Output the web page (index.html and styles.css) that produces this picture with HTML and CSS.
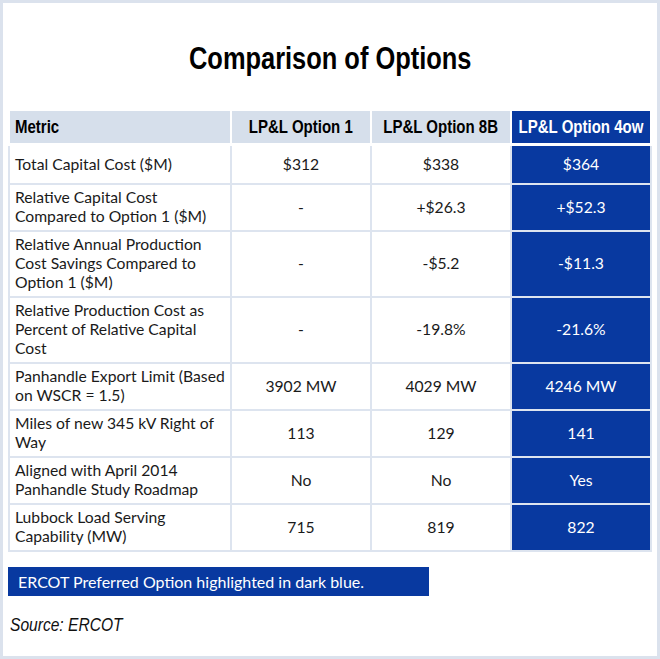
FILE: index.html
```html
<!DOCTYPE html>
<html>
<head>
<meta charset="utf-8">
<link rel="stylesheet" href="styles.css">
</head>
<body>
<div class="frame">
  <h1 class="title"><span class="narrow">Comparison of Options</span></h1>
  <table class="cmp">
    <colgroup>
      <col class="c-metric"><col class="c-opt"><col class="c-opt"><col class="c-opt">
    </colgroup>
    <thead>
      <tr>
        <th class="metric"><div class="hcell"><span class="narrow">Metric</span></div></th>
        <th><div class="hcell"><span class="narrow">LP&amp;L Option 1</span></div></th>
        <th><div class="hcell"><span class="narrow">LP&amp;L Option 8B</span></div></th>
        <th class="hl"><div class="hcell"><span class="narrow">LP&amp;L Option 4ow</span></div></th>
      </tr>
    </thead>
    <tbody>
      <tr class="single">
        <td class="metric">Total Capital Cost ($M)</td>
        <td>$312</td><td>$338</td><td class="hl">$364</td>
      </tr>
      <tr>
        <td class="metric">Relative Capital Cost Compared to Option 1 ($M)</td>
        <td>-</td><td>+$26.3</td><td class="hl">+$52.3</td>
      </tr>
      <tr>
        <td class="metric">Relative Annual Production Cost Savings Compared to Option 1 ($M)</td>
        <td>-</td><td>-$5.2</td><td class="hl">-$11.3</td>
      </tr>
      <tr>
        <td class="metric">Relative Production Cost as Percent of Relative Capital Cost</td>
        <td>-</td><td>-19.8%</td><td class="hl">-21.6%</td>
      </tr>
      <tr>
        <td class="metric">Panhandle Export Limit (Based on WSCR = 1.5)</td>
        <td>3902 MW</td><td>4029 MW</td><td class="hl">4246 MW</td>
      </tr>
      <tr>
        <td class="metric">Miles of new 345 kV Right of Way</td>
        <td>113</td><td>129</td><td class="hl">141</td>
      </tr>
      <tr>
        <td class="metric">Aligned with April 2014 Panhandle Study Roadmap</td>
        <td>No</td><td>No</td><td class="hl">Yes</td>
      </tr>
      <tr>
        <td class="metric">Lubbock Load Serving Capability (MW)</td>
        <td>715</td><td>819</td><td class="hl">822</td>
      </tr>
    </tbody>
  </table>
  <div class="note">ERCOT Preferred Option highlighted in dark blue.</div>
  <div class="source"><span class="narrow">Source: ERCOT</span></div>
</div>
</body>
</html>
```
FILE: styles.css
```css
html, body {
  margin: 0;
  padding: 0;
  background: #ffffff;
}

.frame {
  box-sizing: border-box;
  width: 660px;
  height: 659px;
  border: 3px solid #dbe2ed;
  padding: 0 5px;
  background: #ffffff;
}

/* Arial Narrow look-alike: Liberation Sans condensed horizontally */
.narrow {
  display: inline-block;
  transform: scaleX(0.82);
  white-space: nowrap;
}

.title {
  margin: 0;
  padding-top: 39px;
  height: 68px;
  box-sizing: border-box;
  text-align: center;
  font-family: "Liberation Sans", Arial, sans-serif;
  font-weight: bold;
  font-size: 31px;
  line-height: 34px;
  color: #000000;
}

.title .narrow {
  transform-origin: center;
}

.cmp {
  margin-top: 38px;
  width: 644px;
  border-collapse: collapse;
  table-layout: fixed;
  font-family: Lato, "Liberation Sans", sans-serif;
  font-size: 15.7px;
  line-height: 19px;
  color: #1a1a1a;
}

.c-metric { width: 222px; }
.c-opt { width: 140px; }

.cmp th,
.cmp td {
  border: 2px solid #dde4ef;
  padding: 3px 6px 4px;
  text-align: center;
  vertical-align: middle;
}

.cmp td.metric {
  padding-left: 5px;
  padding-right: 1px;
}

.cmp th {
  height: 28px;
  padding: 2px 0;
  background: #d6dfeb;
  border-color: #ffffff;
  border-bottom-width: 3px;
  font-family: "Liberation Sans", Arial, sans-serif;
  font-weight: bold;
  font-size: 19px;
  line-height: 22px;
  color: #000000;
}

.hcell {
  display: flex;
  justify-content: center;
}

.cmp th.metric .hcell {
  justify-content: flex-start;
  padding-left: 5px;
}

.cmp th .narrow {
  transform: scaleX(0.79);
  transform-origin: center;
}

.cmp th.metric .narrow {
  transform-origin: left center;
}

.cmp .metric {
  text-align: left;
}

.cmp tr.single td {
  height: 30px;
}

.cmp .hl {
  background: #0839a0;
  color: #ffffff;
}

.note {
  margin-top: 15px;
  width: 421px;
  height: 29px;
  box-sizing: border-box;
  padding-left: 10px;
  background: #0839a0;
  color: #ffffff;
  font-family: Lato, "Liberation Sans", sans-serif;
  font-size: 16px;
  line-height: 29px;
}

.source {
  margin-top: 17px;
  padding-left: 2px;
  font-family: "Liberation Sans", Arial, sans-serif;
  font-style: italic;
  font-size: 19px;
  line-height: 24px;
  color: #111111;
}

.source .narrow {
  transform-origin: left center;
}
```
